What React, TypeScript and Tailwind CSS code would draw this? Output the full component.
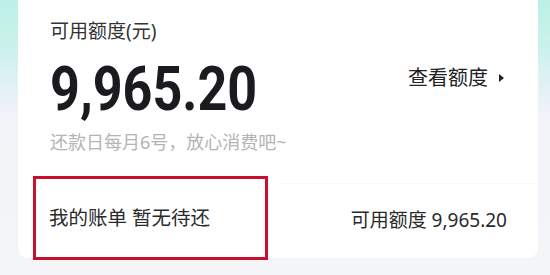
export default function App() {
  return (
    <div
      className="w-[550px] h-[275px] overflow-hidden flex pl-[18px] pr-[12px] bg-[linear-gradient(180deg,#bdf0e6_0%,#cbf2ec_18%,#e4f1f7_32%,#f1f3f8_42%,#f4f5f7_100%)]"
      style={{ fontFamily: '"Noto Sans", "Noto Sans CJK SC", sans-serif' }}
    >
      <div className="w-[520px] h-[258px] bg-white rounded-b-[10px] pt-[19px] flex flex-col">
        {/* Title */}
        <p className="pl-[32px] text-[19px] leading-[24px] text-[#333]">可用额度(元)</p>

        {/* Amount row */}
        <div className="mt-[15px] h-[62px] pl-[32px] pr-[34px] flex items-start justify-between">
          <span
            className="block text-[62px] leading-[62px] font-bold text-[#1b1b1f] scale-x-[0.84] origin-left whitespace-nowrap"
            style={{ fontFamily: "Roboto, sans-serif" }}
          >
            9,965.20
          </span>
          <div className="mt-[6px] flex items-center gap-[11px] text-[20px] leading-[28px] text-[#222]">
            <span>查看额度</span>
            <span className="w-0 h-0 border-y-[4px] border-y-transparent border-l-[5px] border-l-[#222]" />
          </div>
        </div>

        {/* Subtitle */}
        <p className="mt-[10px] pl-[32px] text-[18px] leading-[24px] text-[#b4b4b4]">还款日每月6号，放心消费吧~</p>

        {/* Bottom row */}
        <div className="mt-[22px] h-[84px] shrink-0 flex pl-[15px]">
          <div className="w-[235px] h-full border-[3px] border-[#c8102e] flex items-center pl-[13px]">
            <span className="text-[19.5px] leading-[26px] text-[#2a2a2a]">我的账单 暂无待还</span>
          </div>
          <div className="flex-1 ml-[14px] mt-[7px] h-[72px] border-t border-[#f7f7f7] flex items-center justify-end pr-[31px]">
            <span className="text-[19px] leading-[26px] text-[#2a2a2a]">可用额度 9,965.20</span>
          </div>
        </div>
      </div>
    </div>
  );
}
